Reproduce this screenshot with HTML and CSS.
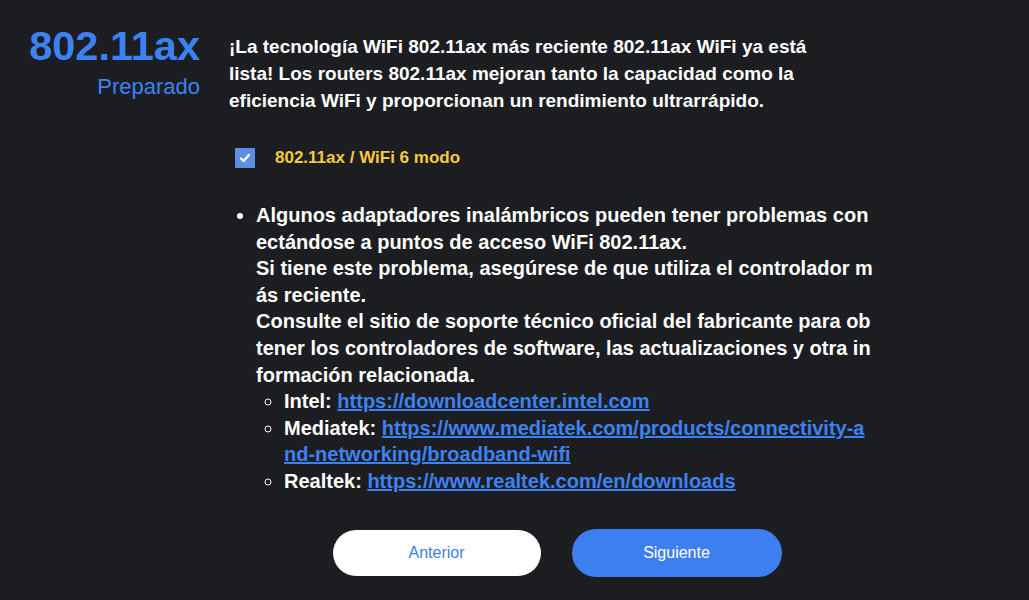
FILE: index.html
```html
<!DOCTYPE html>
<html lang="es">
<head>
<meta charset="utf-8">
<title>802.11ax</title>
<link rel="stylesheet" href="styles.css">
</head>
<body>
<div class="page">
  <div class="side">
    <div class="title">802.11ax</div>
    <div class="subtitle">Preparado</div>
  </div>
  <div class="main">
    <p class="intro">¡La tecnología WiFi 802.11ax más reciente 802.11ax WiFi ya está lista! Los routers 802.11ax mejoran tanto la capacidad como la eficiencia WiFi y proporcionan un rendimiento ultrarrápido.</p>
    <label class="option">
      <span class="check"><svg viewBox="0 0 20 20" width="20" height="20"><path d="M6 10.5 L8.6 13 L14 7" fill="none" stroke="#fff" stroke-width="2.4" stroke-linecap="round" stroke-linejoin="round"/></svg></span>
      <span class="option-label">802.11ax / WiFi 6 modo</span>
    </label>
    <ul class="notes">
      <li>Algunos adaptadores inalámbricos pueden tener problemas conectándose a puntos de acceso WiFi 802.11ax.<br>Si tiene este problema, asegúrese de que utiliza el controlador más reciente.<br>Consulte el sitio de soporte técnico oficial del fabricante para obtener los controladores de software, las actualizaciones y otra información relacionada.
        <ul class="vendors">
          <li>Intel: <a href="#">https://downloadcenter.intel.com</a></li>
          <li>Mediatek: <a href="#">https://www.mediatek.com/products/connectivity-and-networking/broadband-wifi</a></li>
          <li>Realtek: <a href="#">https://www.realtek.com/en/downloads</a></li>
        </ul>
      </li>
    </ul>
    <div class="actions">
      <button class="btn btn-back">Anterior</button>
      <button class="btn btn-next">Siguiente</button>
    </div>
  </div>
</div>
</body>
</html>
```
FILE: styles.css
```css
html, body {
  margin: 0;
  height: 100%;
}
body {
  background-color: #1c1d20;
  background-image: repeating-conic-gradient(#1f2023 0 25%, #1a1b1e 0 50%);
  background-size: 4px 4px;
  font-family: "Liberation Sans", Arial, sans-serif;
  color: #fff;
  overflow: hidden;
}
.page {
  display: flex;
  width: 1029px;
  height: 600px;
}
.side {
  width: 200px;
  flex: none;
  text-align: right;
  padding-top: 22px;
}
.title {
  font-size: 41.5px;
  font-weight: bold;
  color: #3d82f2;
  line-height: 48px;
}
.subtitle {
  font-size: 22px;
  color: #3d82f2;
  line-height: 26px;
  margin-top: 4px;
}
.main {
  margin-left: 29px;
  width: 656px;
  flex: none;
}
.intro {
  margin: 33px 0 0 0;
  width: 615px;
  font-size: 19px;
  font-weight: bold;
  line-height: 27px;
}
.option {
  display: flex;
  align-items: center;
  gap: 20px;
  margin: 34px 0 0 6px;
}
.check {
  width: 20px;
  height: 20px;
  background: #5a8fe3;
  border-radius: 1px;
  display: block;
}
.check svg {
  display: block;
}
.option-label {
  color: #f7c93e;
  font-size: 17px;
  font-weight: bold;
}
.notes {
  margin: 34px 0 0 0;
  padding-left: 27px;
  width: 618.5px;
  font-size: 20px;
  font-weight: bold;
  line-height: 26.6px;
  word-break: break-all;
}
.vendors {
  list-style-type: circle;
  padding-left: 28px;
  margin: 0;
}
.vendors a {
  color: #3d82f2;
  text-decoration: underline;
}
.actions {
  display: flex;
  justify-content: center;
  align-items: center;
  gap: 31px;
  margin-top: 34px;
}
.btn {
  width: 208px;
  height: 48px;
  border-radius: 24px;
  border: none;
  font-family: "Liberation Sans", Arial, sans-serif;
  font-size: 16px;
  cursor: pointer;
}
.btn-back {
  height: 46px;
  background: #fff;
  color: #3d7fe8;
}
.btn-next {
  width: 210px;
  background: #3d7ff0;
  color: #fff;
}
```
